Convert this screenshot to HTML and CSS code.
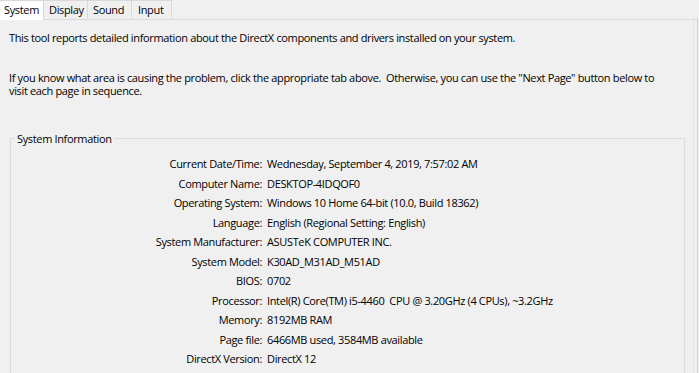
FILE: index.html
```html
<!DOCTYPE html>
<html lang="en">
<head>
    <meta charset="UTF-8">
    <title>DirectX Diagnostic Tool</title>
    <link rel="stylesheet" href="styles.css">
</head>
<body>
    <div class="tabs">
        <div class="tab active">System</div>
        <div class="tab">Display</div>
        <div class="tab">Sound</div>
        <div class="tab narrow">Input</div>
        <div class="tab-fill"></div>
    </div>

    <div class="page">
        <p class="intro">This tool reports detailed information about the DirectX components and drivers installed on your system.</p>
        <p class="intro second">If you know what area is causing the problem, click the appropriate tab above.&nbsp; Otherwise, you can use the "Next Page" button below to visit each page in sequence.</p>

        <fieldset class="group">
            <legend>System Information</legend>
            <div class="info">
                <span class="label">Current Date/Time:</span><span>Wednesday, September 4, 2019, 7:57:02 AM</span>
                <span class="label">Computer Name:</span><span>DESKTOP-4IDQOF0</span>
                <span class="label">Operating System:</span><span>Windows 10 Home 64-bit (10.0, Build 18362)</span>
                <span class="label">Language:</span><span>English (Regional Setting: English)</span>
                <span class="label">System Manufacturer:</span><span>ASUSTeK COMPUTER INC.</span>
                <span class="label">System Model:</span><span>K30AD_M31AD_M51AD</span>
                <span class="label">BIOS:</span><span>0702</span>
                <span class="label">Processor:</span><span>Intel(R) Core(TM) i5-4460&nbsp; CPU @ 3.20GHz (4 CPUs), ~3.2GHz</span>
                <span class="label">Memory:</span><span>8192MB RAM</span>
                <span class="label">Page file:</span><span>6466MB used, 3584MB available</span>
                <span class="label">DirectX Version:</span><span>DirectX 12</span>
            </div>
        </fieldset>
    </div>
</body>
</html>
```

FILE: styles.css
```css
body {
    margin: 0;
    background-color: #f0f0f0;
    font-family: 'Segoe UI', 'Open Sans', sans-serif;
    font-size: 11px;
    letter-spacing: -0.35px;
    color: #000;
    width: 699px;
    height: 373px;
    overflow: hidden;
}

.tabs {
    display: flex;
    height: 19px;
}

.tab {
    box-sizing: border-box;
    width: 44px;
    height: 19px;
    padding: 0 0 0 5px;
    line-height: 17px;
    border: 1px solid #d9d9d9;
    border-bottom: none;
    border-left: none;
    background-color: #f0f0f0;
}

.tab.narrow {
    width: 40px;
    padding-left: 6px;
}

.tab.active {
    background-color: #fff;
    padding-left: 4px;
    height: 20px;
    position: relative;
    z-index: 1;
    margin-bottom: -1px;
}

.tab-fill {
    flex: 1;
}

.page {
    box-sizing: border-box;
    width: 698px;
    height: 354px;
    border-top: 1px solid #d9d9d9;
    border-right: 1px solid #d0d0d0;
    box-shadow: inset -3px 0 0 #f0f0f0, inset -4px 0 0 #e3e3e3;
    padding: 11px 0 0 9px;
    overflow: hidden;
}

.intro {
    margin: 0;
    line-height: 13px;
    width: 665px;
}

.intro.second {
    margin-top: 27px;
}

.group {
    margin: 35px 0 0 1px;
    width: 675px;
    box-sizing: border-box;
    border: 1px solid #dcdcdc;
    padding: 9px 0 20px;
    min-height: 260px;
}

.group legend {
    padding: 0 2px;
    margin-left: 4px;
    line-height: 13px;
}

.info {
    display: grid;
    grid-template-columns: 251px auto;
    column-gap: 5px;
    line-height: 19.5px;
}

.label {
    text-align: right;
}
```
